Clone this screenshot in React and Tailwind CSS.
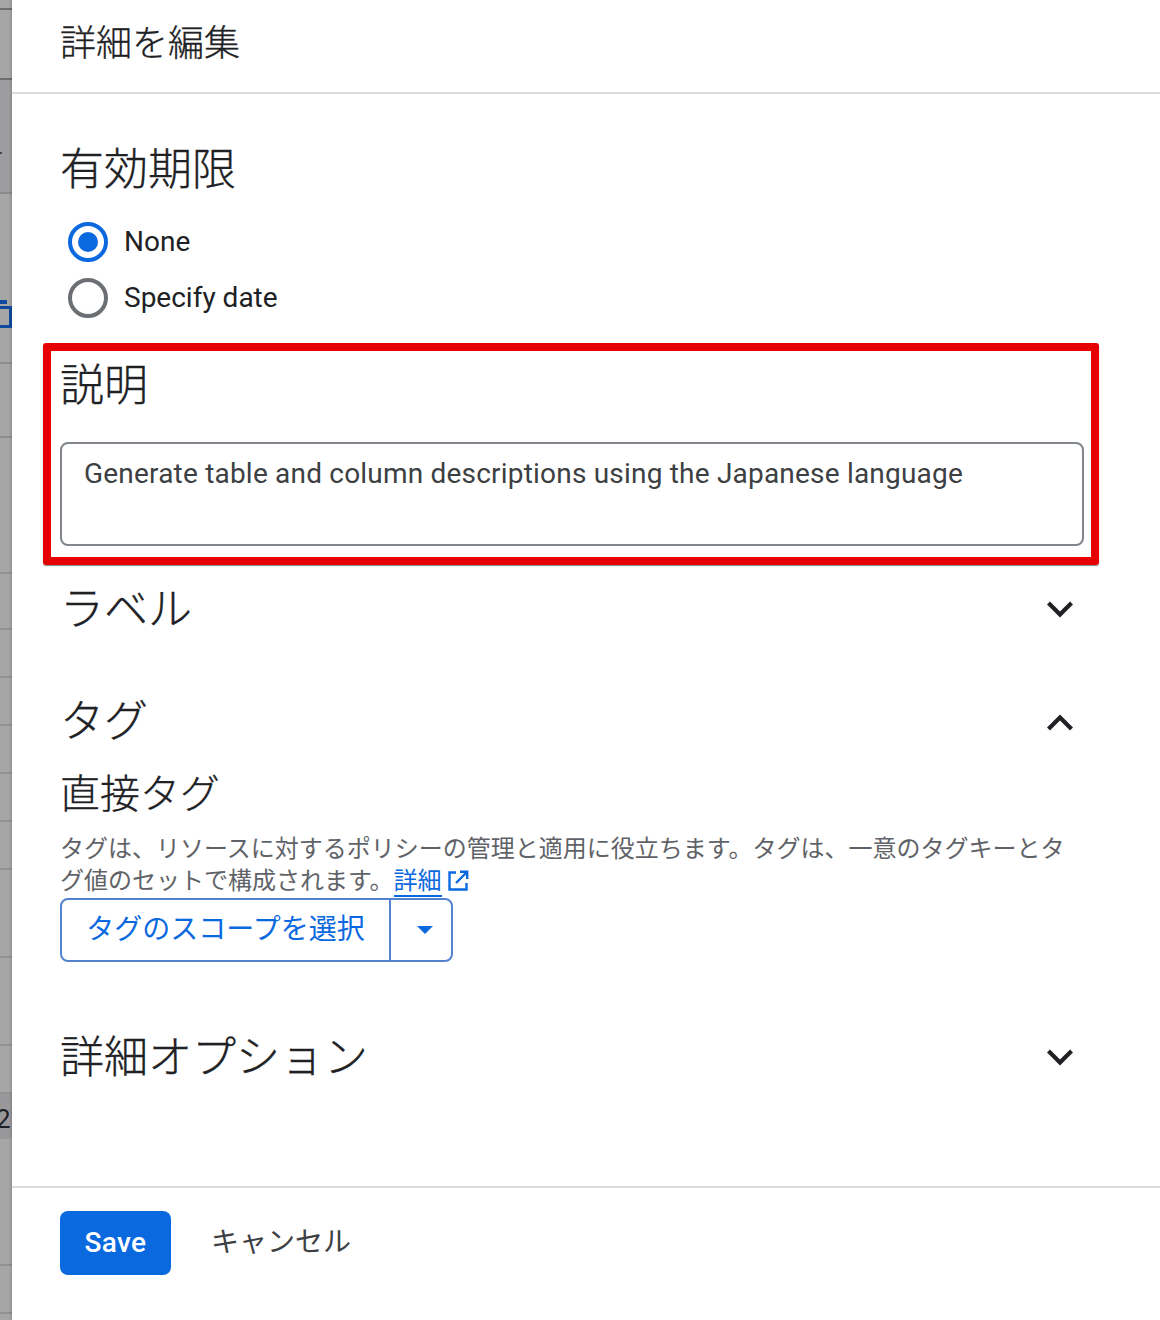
const FONT = "[font-family:Roboto,'Noto_Sans_CJK_JP',sans-serif]";
const HEAD = "font-light text-[#202124] [-webkit-text-stroke:0.3px_#202124]";

function Chevron({ up, className = "" }) {
  return (
    <svg width="32" height="32" viewBox="0 0 32 32" fill="none" className={`shrink-0 ${className}`}>
      <path d={up ? "M4.5 21 L16 9.5 L27.5 21" : "M4.5 10 L16 21.5 L27.5 10"} stroke="#202124" strokeWidth="4.2" />
    </svg>
  );
}

function Radio({ checked, label }) {
  return (
    <div className="flex items-center h-[56px] pl-2 gap-4">
      <div className={`w-10 h-10 rounded-full border-4 flex items-center justify-center ${checked ? "border-[#0b69e0]" : "border-[#6c7075]"}`}>
        {checked && <div className="w-[20px] h-[20px] rounded-full bg-[#0b69e0]" />}
      </div>
      <span className="text-[28px] leading-[40px] text-[#202124]">{label}</span>
    </div>
  );
}

const ROWS = [
  { h: 10, c: "border-[#6e6e6e]" },
  { h: 70, c: "border-[#6e6e6e]" },
  { h: 114, c: "border-[#8a8a8c]", tint: true, mark: true },
  { h: 170, c: "border-[#8e8e8e]", icon: true },
  { h: 74, c: "border-[#8e8e8e]" },
  { h: 136, c: "border-[#929296]" },
  { h: 56, c: "border-[#929296]" },
  { h: 48, c: "border-[#929296]" },
  { h: 48, c: "border-[#929296]" },
  { h: 48, c: "border-[#929296]" },
  { h: 48, c: "border-[#929296]" },
  { h: 48, c: "border-[#929296]" },
  { h: 88, c: "border-[#929296]" },
  { h: 88, c: "border-[#929296]" },
  { h: 48, c: "border-[#929296]" },
  { h: 45, c: "border-transparent", two: true },
  { h: 127, c: "border-[#929296]" },
  { h: 48, c: "border-[#929296]" },
];

function Strip() {
  return (
    <div className="relative w-3 h-[1320px] shrink-0 overflow-hidden bg-[#a6a6a6] flex flex-col">
      {ROWS.map((r, i) => (
        <div
          key={i}
          style={{ height: r.h }}
          className={`shrink-0 border-b-2 box-border flex flex-col ${r.c} ${r.tint ? "bg-[#9d9da0]" : ""} ${r.two ? "bg-[#98989b] justify-center" : ""}`}
        >
          {r.mark && <div className="mt-[72px] w-[2px] h-[2px] bg-[#444]" />}
          {r.icon && (
            <div className="mt-[106px] flex flex-col">
              <div className="w-[7px] h-1 bg-[#0f4a9e]" />
              <div className="mt-[2px] w-3 h-[22px] border-[3px] border-l-0 border-[#0f4a9e]" />
            </div>
          )}
          {r.two && <span className="-ml-[4px] pt-[6px] text-[26px] leading-none text-[#202124]">2</span>}
        </div>
      ))}
      <div className="absolute inset-y-0 right-0 w-[3px] bg-gradient-to-r from-transparent to-[#00000022]" />
    </div>
  );
}

export default function App() {
  return (
    <div className={`flex w-[1160px] h-[1320px] overflow-hidden bg-white ${FONT}`}>
      <Strip />
      <div className="flex-1 flex flex-col min-w-0">
        <header className="h-[94px] shrink-0 border-b-2 border-[#dadce0] pl-[48px] pt-[19px]">
          <h1 className={`text-[36px] leading-[50px] ${HEAD}`}>詳細を編集</h1>
        </header>

        <section className="pl-[48px] pt-[45px] h-[249px] shrink-0">
          <h2 className={`text-[44px] leading-[62px] ${HEAD}`}>有効期限</h2>
          <div className="mt-[13px] flex flex-col">
            <Radio checked label="None" />
            <Radio label="Specify date" />
          </div>
        </section>

        <section className="ml-[31px] w-[1056px] h-[222px] shrink-0 border-[8px] border-[#e60000] rounded-[3px] shadow-[0_1px_1px_#888] pl-[9px] pr-[7px] pt-[4px] box-border">
          <h2 className={`text-[44px] leading-[62px] ${HEAD}`}>説明</h2>
          <div className="mt-[25px] h-[104px] w-[1024px] border-2 border-[#80868b] rounded-[8px] px-[22px] pt-[8px] box-border">
            <p className="text-[28px] leading-[44px] text-[#3c4043] tracking-[0.2px] whitespace-nowrap">
              Generate table and column descriptions using the Japanese language
            </p>
          </div>
        </section>

        <section className="pl-[48px] pr-[84px] h-[87px] shrink-0 flex items-center justify-between">
          <h2 className={`pt-[2px] text-[44px] leading-[62px] ${HEAD}`}>ラベル</h2>
          <Chevron />
        </section>

        <section className="pl-[48px] pr-[84px] h-[70px] mt-[34px] shrink-0 flex items-center justify-between">
          <h2 className={`pt-[2px] text-[44px] leading-[62px] ${HEAD}`}>タグ</h2>
          <Chevron up className="mt-[6px]" />
        </section>

        <section className="pl-[48px] pr-[84px] mt-[11px] shrink-0">
          <h3 className={`text-[40px] leading-[56px] ${HEAD}`}>直接タグ</h3>
          <p className="mt-[10px] w-[1010px] text-[24px] leading-[32px] text-[#5f6368]">
            タグは、リソースに対するポリシーの管理と適用に役立ちます。タグは、一意のタグキーとタグ値のセットで構成されます。
            <a className="text-[#0b69e0] border-b-2 border-[#0b69e0]">詳細</a>
            <svg className="inline-block ml-[5px] align-[-3px]" width="22" height="22" viewBox="0 0 22 22" fill="none" stroke="#0b69e0" strokeWidth="2.4">
              <path d="M9 2.5 H2.5 V19.5 H19.5 V13" />
              <path d="M13 1.8 H20.2 V9 M20 2 L9 13" />
            </svg>
          </p>
          <div className="flex items-stretch w-[393px] h-[64px] border-2 border-[#5383cf] rounded-[8px] mt-[1px] box-border">
            <div className="w-[329px] border-r-2 border-[#5383cf] flex items-center justify-center text-[28px] text-[#0b69e0]">
              タグのスコープを選択
            </div>
            <div className="flex-1 flex items-center justify-center pl-[8px]">
              <div className="w-0 h-0 border-x-[8px] border-x-transparent border-t-[8px] border-t-[#0b69e0]" />
            </div>
          </div>
        </section>

        <section className="pl-[48px] pr-[84px] h-[62px] mt-[64px] shrink-0 flex items-center justify-between">
          <h2 className={`pt-[2px] text-[44px] leading-[62px] ${HEAD}`}>詳細オプション</h2>
          <Chevron />
        </section>

        <div className="flex-1" />

        <footer className="h-[134px] shrink-0 border-t-2 border-[#dadce0] pl-[48px] pt-[23px] flex items-start gap-[40px]">
          <button className="w-[111px] h-[64px] rounded-[8px] bg-[#0b69e0] text-white text-[28px] font-medium tracking-[0.3px]">Save</button>
          <span className="h-[64px] flex items-center text-[28px] text-[#3c4043]">キャンセル</span>
        </footer>
      </div>
    </div>
  );
}
